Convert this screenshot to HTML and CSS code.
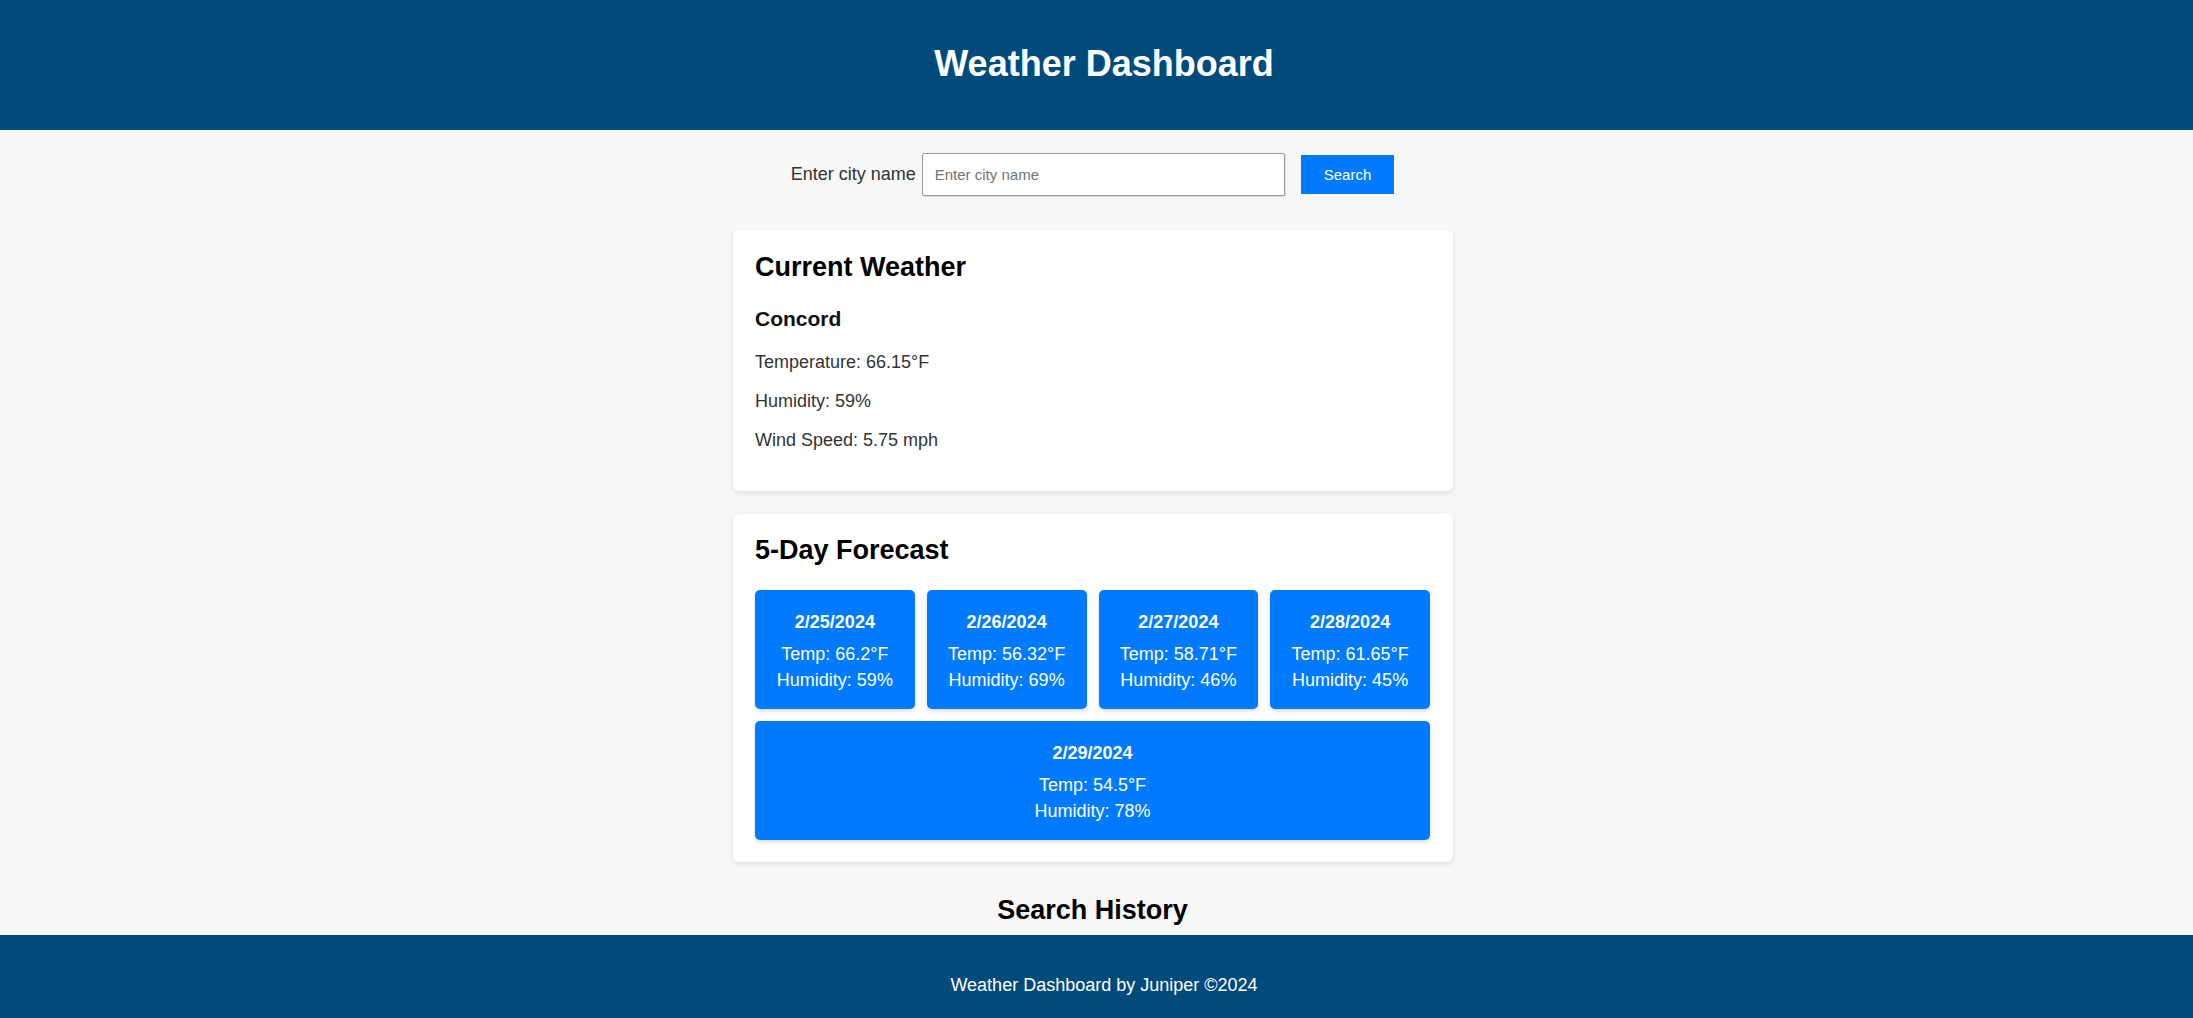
FILE: index.html
```html
<!DOCTYPE html>
<html lang="en">
<head>
<meta charset="utf-8">
<title>Weather Dashboard</title>
<link rel="stylesheet" href="styles.css">
</head>
<body>
<header class="site-header">
  <h1 class="site-title">Weather Dashboard</h1>
</header>
<main class="main">
  <div class="container">
    <form class="search-row" onsubmit="return false;">
      <label class="search-label" for="city">Enter city name</label>
      <input class="search-input" id="city" type="text" placeholder="Enter city name">
      <button class="search-btn" type="submit">Search</button>
    </form>

    <section class="card current">
      <h2 class="card-title">Current Weather</h2>
      <h3 class="city">Concord</h3>
      <p class="stat">Temperature: 66.15°F</p>
      <p class="stat">Humidity: 59%</p>
      <p class="stat">Wind Speed: 5.75 mph</p>
    </section>

    <section class="card forecast">
      <h2 class="card-title forecast-title">5-Day Forecast</h2>
      <div class="days">
        <div class="day">
          <p class="day-date">2/25/2024</p>
          <p class="day-temp">Temp: 66.2°F</p>
          <p class="day-hum">Humidity: 59%</p>
        </div>
        <div class="day">
          <p class="day-date">2/26/2024</p>
          <p class="day-temp">Temp: 56.32°F</p>
          <p class="day-hum">Humidity: 69%</p>
        </div>
        <div class="day">
          <p class="day-date">2/27/2024</p>
          <p class="day-temp">Temp: 58.71°F</p>
          <p class="day-hum">Humidity: 46%</p>
        </div>
        <div class="day">
          <p class="day-date">2/28/2024</p>
          <p class="day-temp">Temp: 61.65°F</p>
          <p class="day-hum">Humidity: 45%</p>
        </div>
        <div class="day">
          <p class="day-date">2/29/2024</p>
          <p class="day-temp">Temp: 54.5°F</p>
          <p class="day-hum">Humidity: 78%</p>
        </div>
      </div>
    </section>

    <section class="history">
      <h2 class="history-title">Search History</h2>
    </section>
  </div>
</main>
<footer class="site-footer">
  <p class="footer-text">Weather Dashboard by Juniper ©2024</p>
</footer>
</body>
</html>
```

FILE: styles.css
```css
* {
  box-sizing: border-box;
}

html, body {
  margin: 0;
  padding: 0;
}

body {
  background: #f7f7f7;
  font-family: "Liberation Sans", Arial, sans-serif;
  font-size: 18px;
  line-height: 21px;
  color: #333;
}

.site-header {
  background: #014a7c;
  padding: 43px 0 46px 15px;
  text-align: center;
}

.site-title {
  margin: 0;
  font-size: 36px;
  line-height: 41px;
  font-weight: 700;
  color: #fff;
}

.main {
  padding-right: 8px;
}

.container {
  width: 720px;
  margin: 0 auto;
}

.search-row {
  display: flex;
  align-items: center;
  justify-content: center;
  padding-top: 23px;
  margin: 0 0 34px;
}

.search-label {
  font-size: 18px;
  line-height: 21px;
  color: #333;
  margin-right: 6px;
}

.search-input {
  width: 363px;
  height: 43px;
  border: 1px solid #999;
  border-radius: 2px;
  box-shadow: 1px 1px 1px rgba(0, 0, 0, 0.12);
  background: #fff;
  padding: 0 12px;
  font-family: "Liberation Sans", Arial, sans-serif;
  font-size: 15px;
  color: #333;
  margin-right: 16px;
}

.search-input::placeholder {
  color: #757575;
}

.search-btn {
  height: 39px;
  padding: 0 23px;
  border: 0;
  border-radius: 0;
  background: #007bff;
  color: #fff;
  font-family: "Liberation Sans", Arial, sans-serif;
  font-size: 15px;
  cursor: pointer;
}

.card {
  background: #fff;
  border-radius: 6px;
  box-shadow: 0 2px 5px rgba(0, 0, 0, 0.1);
  padding: 21.5px 22.5px 40.5px;
}

.card-title {
  margin: 0 0 24px;
  font-size: 27px;
  line-height: 31px;
  font-weight: 700;
  color: #000;
}

.city {
  margin: 0 0 21px;
  font-size: 21px;
  line-height: 24px;
  font-weight: 700;
  color: #111;
}

.stat {
  margin: 0 0 18px;
  color: #333;
}

.stat:last-child {
  margin-bottom: 0;
}

.forecast {
  margin-top: 22.5px;
  padding-bottom: 22px;
}

.forecast-title {
  margin-bottom: 23.5px;
}

.days {
  display: flex;
  flex-wrap: wrap;
  gap: 12px;
}

.day {
  flex: 1 0 calc(25% - 9.1px);
  background: #007bff;
  color: #fff;
  border-radius: 5px;
  box-shadow: 0 2px 4px rgba(0, 0, 0, 0.15);
  padding: 22px 10px 18px;
  text-align: center;
}

.day p {
  margin: 0;
}

.day-date {
  font-weight: 700;
  margin-bottom: 11px !important;
}

.day-temp {
  margin-bottom: 5px !important;
}

.history {
  text-align: center;
  padding: 33.5px 0 8.5px;
}

.history-title {
  margin: 0;
  font-size: 27px;
  line-height: 31px;
  font-weight: 700;
  color: #000;
}

.site-footer {
  background: #014a7c;
  padding: 40px 0 35px 15px;
  text-align: center;
}

.footer-text {
  margin: 0;
  color: #fff;
  font-size: 18px;
  line-height: 21px;
}
```
